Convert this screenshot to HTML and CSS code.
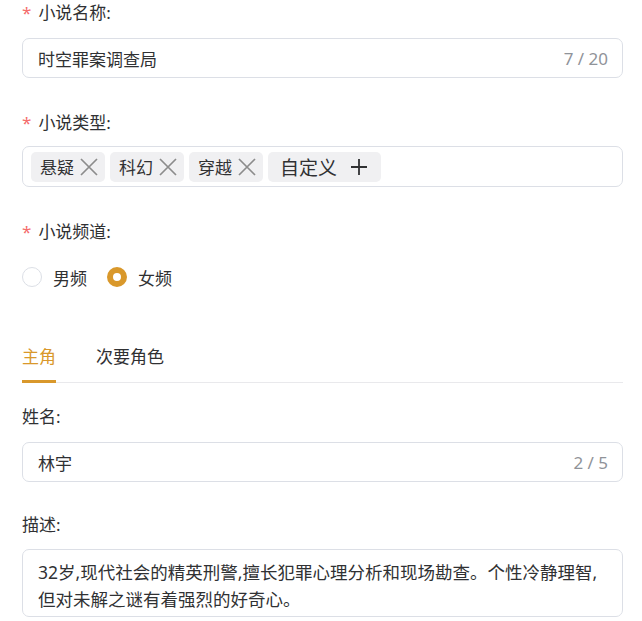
FILE: index.html
```html
<!DOCTYPE html>
<html>
<head>
  <title>小说设定</title>
  <meta name="viewport" content="width=device-width, initial-scale=1.0">
  <link rel="stylesheet" href="styles.css">
</head>
<body>
  <div class="form">
    <div class="form-item">
      <label class="form-label required">小说名称:</label>
      <div class="input">
        <span class="input-value">时空罪案调查局</span>
        <span class="input-count">7 / 20</span>
      </div>
    </div>

    <div class="form-item form-item-tags">
      <label class="form-label required">小说类型:</label>
      <div class="tag-box">
        <span class="tag">悬疑
          <svg class="tag-close" viewBox="0 0 18 18"><path d="M1 1 L17 17 M17 1 L1 17" /></svg>
        </span>
        <span class="tag">科幻
          <svg class="tag-close" viewBox="0 0 18 18"><path d="M1 1 L17 17 M17 1 L1 17" /></svg>
        </span>
        <span class="tag">穿越
          <svg class="tag-close" viewBox="0 0 18 18"><path d="M1 1 L17 17 M17 1 L1 17" /></svg>
        </span>
        <span class="tag tag-add">自定义
          <svg class="tag-plus" viewBox="0 0 18 18"><path d="M9 1 V17 M1 9 H17" /></svg>
        </span>
      </div>
    </div>

    <div class="form-item">
      <label class="form-label required">小说频道:</label>
      <div class="radio-group">
        <span class="radio"><span class="radio-dot"></span>男频</span>
        <span class="radio checked"><span class="radio-dot"></span>女频</span>
      </div>
    </div>

    <div class="tabs">
      <span class="tab active">主角</span>
      <span class="tab">次要角色</span>
    </div>

    <div class="form-item form-item-name">
      <label class="form-label">姓名:</label>
      <div class="input">
        <span class="input-value">林宇</span>
        <span class="input-count">2 / 5</span>
      </div>
    </div>

    <div class="form-item form-item-desc">
      <label class="form-label">描述:</label>
      <div class="textarea">32岁,现代社会的精英刑警,擅长犯罪心理分析和现场勘查。个性冷静理智,但对未解之谜有着强烈的好奇心。</div>
    </div>
  </div>
</body>
</html>
```

FILE: styles.css
```css
body {
  margin: 0;
  background-color: #fff;
  color: #303133;
  font-family: "Noto Sans", "Noto Sans CJK SC", sans-serif;
  font-size: 17px;
  overflow: hidden;
}

.form {
  padding: 0 19px 0 22px;
}

.form-item {
  margin-bottom: 32px;
}

.form-label {
  display: block;
  line-height: 26px;
  margin-bottom: 12px;
}

.form-label.required:before {
  content: "*";
  color: #f56c6c;
  margin-right: 7px;
}

.form-item-tags .form-label {
  margin-bottom: 10px;
}

.form-item-name {
  margin-bottom: 30px;
}

.form-item-desc .form-label {
  margin-bottom: 11px;
}

.input {
  display: flex;
  align-items: center;
  justify-content: space-between;
  height: 40px;
  box-sizing: border-box;
  border: 1px solid #dcdfe6;
  border-radius: 7px;
  padding: 0 14px 0 15px;
}

.input-count {
  color: #909399;
}

.tag-box {
  display: flex;
  align-items: center;
  gap: 5px;
  height: 41px;
  box-sizing: border-box;
  border: 1px solid #dcdfe6;
  border-radius: 7px;
  padding: 0 8px;
}

.tag {
  display: flex;
  align-items: center;
  height: 30px;
  padding: 0 7px 0 9px;
  background-color: #f0f0f2;
  border-radius: 5px;
}

.tag-close {
  width: 18px;
  height: 18px;
  margin-left: 6px;
  stroke: #8c8c8c;
  stroke-width: 1.7;
  fill: none;
}

.tag-add {
  font-size: 19px;
  padding: 0 13px 0 12px;
}

.tag-plus {
  width: 18px;
  height: 18px;
  margin-left: 13px;
  stroke: #303133;
  stroke-width: 1.8;
  fill: none;
}

.radio-group {
  display: flex;
  align-items: center;
  gap: 20px;
  height: 40px;
}

.radio {
  display: flex;
  align-items: center;
}

.radio-dot {
  width: 20px;
  height: 20px;
  box-sizing: border-box;
  border: 1px solid #dcdfe6;
  border-radius: 50%;
  margin-right: 11px;
}

.radio.checked .radio-dot {
  border: 6px solid #d9982b;
  background-color: #fff;
}

.tabs {
  display: flex;
  gap: 40px;
  margin-top: 39px;
  border-bottom: 1px solid #e9e9ec;
  margin-bottom: 21px;
}

.tab {
  padding: 8px 0 10px;
  line-height: 26px;
  border-bottom: 3px solid transparent;
  margin-bottom: -1px;
}

.tab.active {
  color: #d9982b;
  border-bottom-color: #d9982b;
}

.textarea {
  border: 1px solid #dcdfe6;
  border-radius: 7px;
  padding: 9px 14px 3px 15px;
  font-size: 17.5px;
  line-height: 27px;
}
```
